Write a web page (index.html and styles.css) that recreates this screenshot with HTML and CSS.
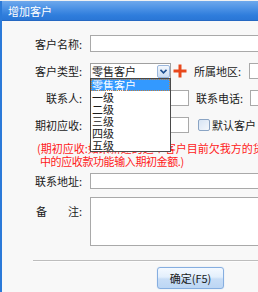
FILE: index.html
```html
<!DOCTYPE html>
<html lang="zh-CN">
<head>
<meta charset="utf-8">
<title>增加客户</title>
<link rel="stylesheet" href="styles.css">
</head>
<body>
<div class="topstrip"></div>
<div class="dialog">
  <div class="titlebar">增加客户</div>
  <div class="content">
    <div class="row r1">
      <label class="lbl">客户名称:</label>
      <div class="input wide h17"></div>
    </div>
    <div class="row">
      <label class="lbl">客户类型:</label>
      <div class="selectwrap">
        <div class="select">
          <span class="seltext">零售客户</span>
          <span class="selbtn"><svg width="7" height="5" viewBox="0 0 7 5"><path d="M0.5 0.8 L3.5 3.8 L6.5 0.8" fill="none" stroke="#1d4f91" stroke-width="1.6"/></svg></span>
        </div>
        <ul class="droplist">
          <li class="sel">零售客户</li>
          <li>一级</li>
          <li>二级</li>
          <li>三级</li>
          <li>四级</li>
          <li>五级</li>
        </ul>
      </div>
      <span class="plus"><svg width="14" height="14" viewBox="0 0 14 14"><path d="M7 0.5 V13.5 M0.5 7 H13.5" stroke="#e8481c" stroke-width="3"/></svg></span>
      <label class="lbl2">所属地区:</label>
      <div class="input wide2"></div>
    </div>
    <div class="row">
      <label class="lbl">联系人:</label>
      <div class="input mid"></div>
      <label class="lbl2 l3">联系电话:</label>
      <div class="input wide2"></div>
    </div>
    <div class="row">
      <label class="lbl">期初应收:</label>
      <div class="input mid"></div>
      <span class="check"></span>
      <span class="checktext">默认客户</span>
    </div>
    <div class="note">
      <div class="n1">(期初应收:如果新建的这个客户目前欠我方的货款，可以在财务管理</div>
      <div class="n2">中的应收款功能输入期初金额.)</div>
    </div>
    <div class="row r5">
      <label class="lbl">联系地址:</label>
      <div class="input wide"></div>
    </div>
    <div class="row r6">
      <label class="lbl">备<span class="sp"></span>注:</label>
      <div class="input wide area"></div>
    </div>
    <div class="sep"></div>
    <div class="btnrow">
      <button class="btn">确定(F5)</button>
    </div>
  </div>
</div>
</body>
</html>
```

FILE: styles.css
```css
html, body {
  margin: 0;
  padding: 0;
}
body {
  width: 258px;
  height: 292px;
  overflow: hidden;
  background: #f8f8f8;
  font-family: "Noto Sans CJK SC", "Liberation Sans", sans-serif;
  font-size: 11px;
  color: #1a1a1a;
}
.topstrip {
  height: 1px;
  background: #eef0f2;
}
.dialog {
  border-left: 2px solid #2b7ad9;
  background: #f8f8f8;
  height: 291px;
  width: 256px;
  overflow: hidden;
}
.titlebar {
  height: 20px;
  margin-left: -2px;
  padding-left: 8px;
  line-height: 20px;
  color: #fff;
  font-size: 11px;
  background: linear-gradient(#6ea8ec 0%, #4f94e6 35%, #2f7ddc 75%, #2a76d6 100%);
  border-bottom: 1px solid #2568c2;
  box-sizing: border-box;
}
.content {
  padding-top: 14px;
}
.row {
  display: flex;
  align-items: center;
  height: 16px;
  margin-bottom: 11px;
  position: relative;
}
.r1 {
  height: 17px;
}
.lbl {
  width: 80px;
  margin-right: 8px;
  text-align: right;
  white-space: nowrap;
  line-height: 16px;
  flex: none;
}
.sp {
  display: inline-block;
  width: 21px;
}
.input {
  box-sizing: border-box;
  height: 16px;
  background: #fff;
  border: 1px solid #a9a9a9;
  flex: none;
}
.h17 {
  height: 17px;
}
.wide {
  width: 200px;
}
.wide2 {
  width: 40px;
}
.mid {
  width: 99px;
}
.selectwrap {
  position: relative;
  width: 81px;
  height: 16px;
  flex: none;
}
.select {
  box-sizing: border-box;
  height: 16px;
  width: 81px;
  background: #fff;
  border: 1px solid #a0a0a0;
  display: flex;
  align-items: center;
  justify-content: space-between;
  padding-left: 1px;
}
.seltext {
  line-height: 14px;
}
.selbtn {
  width: 13px;
  height: 13px;
  box-sizing: border-box;
  border: 1px solid #9bb7dc;
  border-radius: 2px;
  background: linear-gradient(#f4f8fd, #c9dcf3);
  display: flex;
  align-items: center;
  justify-content: center;
}
.droplist {
  position: absolute;
  top: 15px;
  left: 0;
  width: 81px;
  margin: 0;
  padding: 0;
  list-style: none;
  background: #fff;
  border: 1px solid #4a4a4a;
  box-sizing: border-box;
  z-index: 5;
}
.droplist li {
  height: 12px;
  line-height: 12px;
  padding-left: 1px;
  font-size: 11px;
  box-sizing: border-box;
}
.droplist li.sel {
  background: #3399ff;
  color: #fff;
  outline: 1px dotted #c08040;
  outline-offset: -1px;
}
.plus {
  display: flex;
  width: 14px;
  height: 14px;
  margin-left: 2px;
  margin-top: -1px;
  flex: none;
}
.lbl2 {
  margin-left: 7px;
  width: 55px;
  white-space: nowrap;
  line-height: 16px;
  flex: none;
}
.l3 {
  margin-left: 7px;
  width: 54px;
}
.check {
  box-sizing: border-box;
  width: 12px;
  height: 12px;
  margin-left: 9px;
  border: 1px solid #8aa4c4;
  border-radius: 2px;
  background: linear-gradient(135deg, #d6e4f4, #f4f8fc);
  flex: none;
}
.checktext {
  margin-left: 2px;
  white-space: nowrap;
}
.note {
  margin-top: -2px;
  color: #ff1a1a;
  line-height: 13px;
  white-space: nowrap;
}
.n1 {
  padding-left: 35px;
}
.n2 {
  padding-left: 38px;
  letter-spacing: -0.4px;
}
.r5 {
  margin-top: 5px;
  margin-bottom: 8px;
}
.r6 {
  height: 49px;
  align-items: flex-start;
  margin-bottom: 0;
}
.r6 .lbl {
  margin-top: 6px;
}
.area {
  height: 49px;
}
.sep {
  margin-top: 14px;
  margin-left: 31px;
  height: 1px;
  background: #bdbdbd;
  border-bottom: 1px solid #fdfdfd;
}
.btnrow {
  padding-left: 155px;
  margin-top: 5px;
}
.btn {
  width: 67px;
  height: 22px;
  box-sizing: border-box;
  border: 1px solid #86aee0;
  border-radius: 3px;
  background: linear-gradient(#f4f9ff 0%, #e3effc 45%, #c8ddf6 55%, #bcd6f4 100%);
  font-family: "Noto Sans CJK SC", "Liberation Sans", sans-serif;
  font-size: 11px;
  color: #1a1a1a;
  padding: 0;
  box-shadow: 0 0 1px #a8c8ee;
}
```
